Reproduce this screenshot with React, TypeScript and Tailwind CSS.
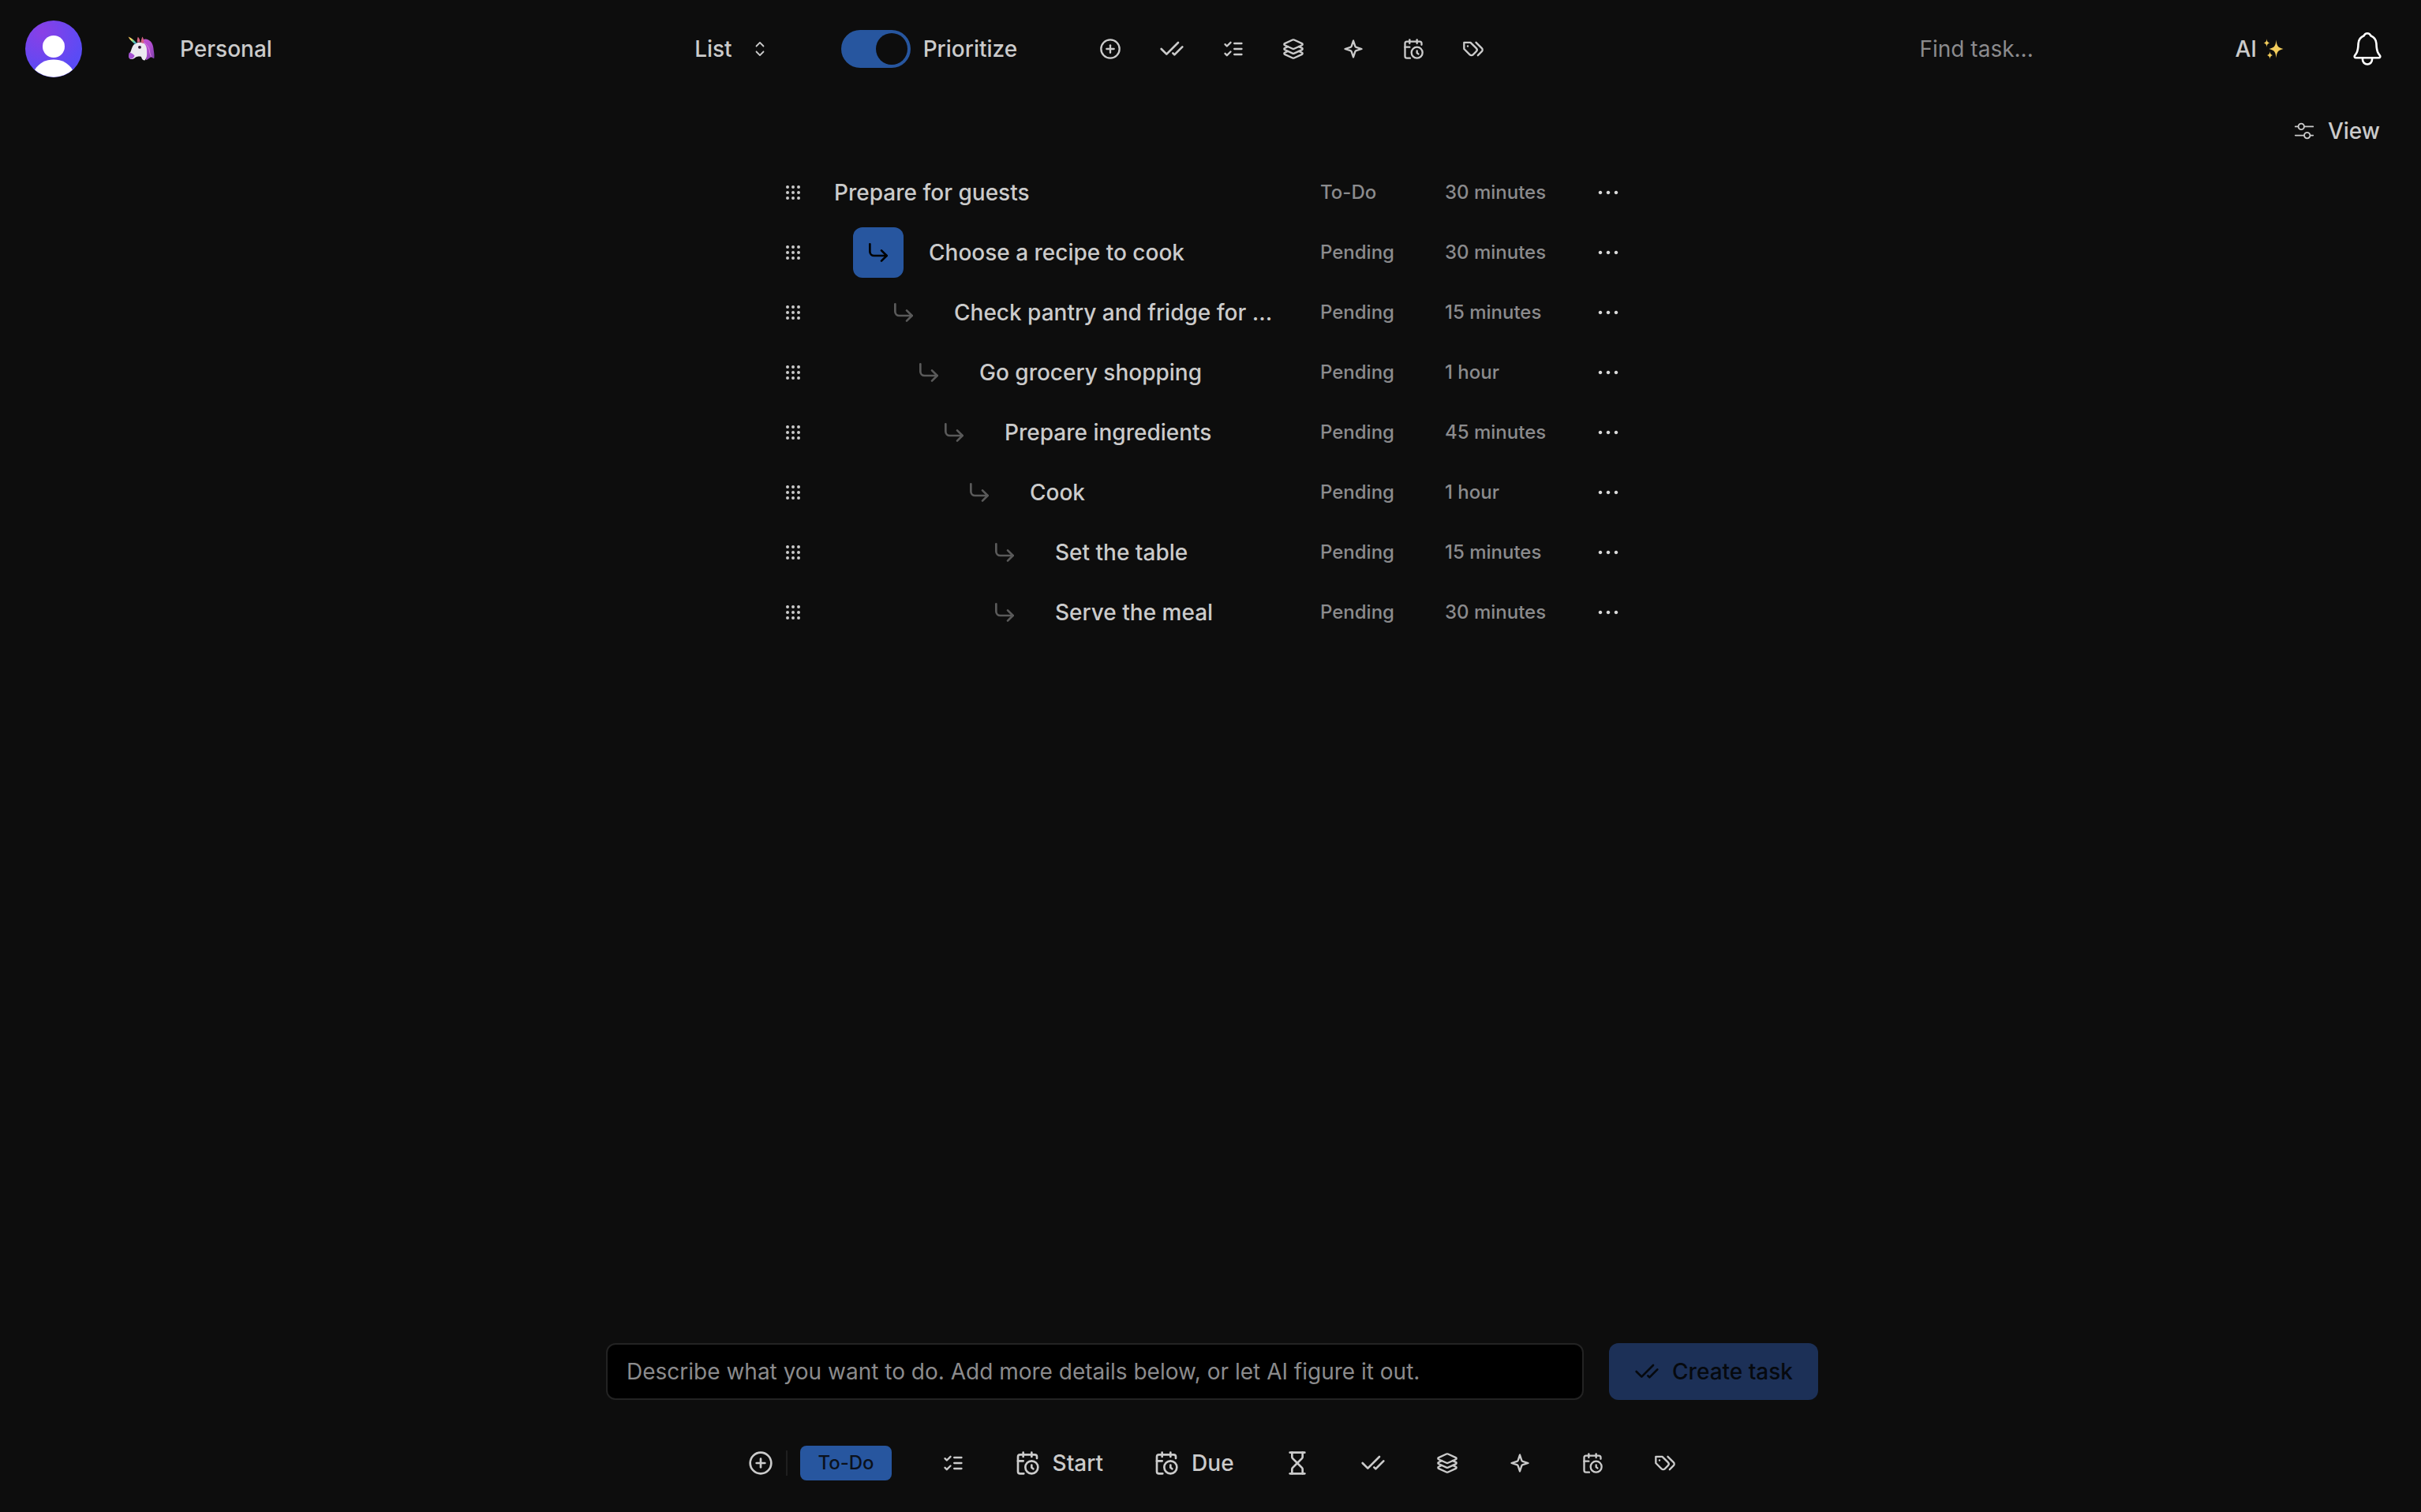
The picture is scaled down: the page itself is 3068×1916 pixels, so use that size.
import { useState, type ReactNode } from "react";
import { CheckCheck, CirclePlus, CornerDownRight, Grip, Hourglass } from "lucide-react";
import { RxCaretSort, RxDotsHorizontal, RxMixerHorizontal } from "react-icons/rx";

type IconProps = { className?: string };

function Glyph({ className, children }: { className?: string; children: ReactNode }) {
  return (
    <svg
      viewBox="0 0 24 24"
      fill="none"
      stroke="currentColor"
      strokeWidth={2}
      strokeLinecap="round"
      strokeLinejoin="round"
      className={className}
      aria-hidden="true"
    >
      {children}
    </svg>
  );
}

const ListChecks = ({ className }: IconProps) => (
  <Glyph className={className}>
    <path d="m3 17 2 2 4-4" />
    <path d="m3 7 2 2 4-4" />
    <path d="M13 6h8" />
    <path d="M13 12h8" />
    <path d="M13 18h8" />
  </Glyph>
);

const LayersThree = ({ className }: IconProps) => (
  <Glyph className={className}>
    <path d="m12.83 2.18a2 2 0 0 0-1.66 0L2.6 6.08a1 1 0 0 0 0 1.83l8.58 3.91a2 2 0 0 0 1.66 0l8.58-3.9a1 1 0 0 0 0-1.83Z" />
    <path d="m6.08 9.5-3.5 1.6a1 1 0 0 0 0 1.81l8.6 3.91a2 2 0 0 0 1.65 0l8.58-3.9a1 1 0 0 0 0-1.83l-3.5-1.59" />
    <path d="m6.08 14.5-3.5 1.6a1 1 0 0 0 0 1.81l8.6 3.91a2 2 0 0 0 1.65 0l8.58-3.9a1 1 0 0 0 0-1.83l-3.5-1.59" />
  </Glyph>
);

const Star = ({ className }: IconProps) => (
  <Glyph className={className}>
    <path d="m12 3-1.9 5.8a2 2 0 0 1-1.287 1.288L3 12l5.8 1.9a2 2 0 0 1 1.288 1.287L12 21l1.9-5.8a2 2 0 0 1 1.287-1.288L21 12l-5.8-1.9a2 2 0 0 1-1.288-1.287Z" />
  </Glyph>
);

const CalendarTime = ({ className }: IconProps) => (
  <Glyph className={className}>
    <path d="M21 7.5V6a2 2 0 0 0-2-2H5a2 2 0 0 0-2 2v14a2 2 0 0 0 2 2h3.5" />
    <path d="M16 2v4" />
    <path d="M8 2v4" />
    <path d="M3 10h5" />
    <path d="M17.5 17.5 16 16.3V14" />
    <circle cx="16" cy="16" r="6" />
  </Glyph>
);

const TagPair = ({ className }: IconProps) => (
  <Glyph className={className}>
    <path d="M9 5H2v7l6.29 6.29c.94.94 2.48.94 3.42 0l3.58-3.58c.94-.94.94-2.48 0-3.42L9 5Z" />
    <path d="M6 9.01V9" />
    <path d="m15 5 6.3 6.3a2.4 2.4 0 0 1 0 3.4L17 19" />
  </Glyph>
);

const Bell = ({ className }: IconProps) => (
  <svg viewBox="0 0 36 44" fill="none" stroke="currentColor" strokeWidth={2.6} strokeLinejoin="round" className={className} aria-hidden="true">
    <path d="M18 2.200c-2 0-3.500 1-4.300 3C9.500 7 6.800 10.500 6.600 15c-.2 6-.3 9.500-2.600 12.700L2.200 30.300c-1 1.400-.3 3 1.500 3h28.600c1.800 0 2.500-1.600 1.500-3l-1.800-2.600c-2.300-3.200-2.400-6.700-2.600-12.700-.2-4.500-2.900-8-7.100-9.800-.8-2-2.300-3-4.300-3Z" />
    <path d="M12 33.500v2a6 6 0 0 0 12 0v-2" />
  </svg>
);

const Unicorn = ({ className }: IconProps) => (
  <svg viewBox="0 0 34 32" className={className} aria-hidden="true">
    <defs>
      <linearGradient id="horn" x1="0" y1="0" x2="1" y2="1">
        <stop offset="0" stopColor="#e8a84c" />
        <stop offset="0.35" stopColor="#f4e06a" />
        <stop offset="0.65" stopColor="#5fd0a8" />
        <stop offset="1" stopColor="#4aa3e8" />
      </linearGradient>
      <linearGradient id="mane" x1="0" y1="0" x2="1" y2="1">
        <stop offset="0" stopColor="#c552cf" />
        <stop offset="0.5" stopColor="#b04fd0" />
        <stop offset="1" stopColor="#7d3fa8" />
      </linearGradient>
    </defs>
    <path d="M17 7c1-3 5-4.500 9-2.500 4.500 2.300 6 6.500 6.500 11 .3 4 1.500 7 .8 12.500-2 0-2.300-2-4-1.500-2.300.5-3 3-6.300 3.500 1-7-2-11-3-14Z" fill="url(#mane)" />
    <path d="M6 13c2-4 6-5.500 10.500-5.200 5.500.6 7.500 5 7.500 9.700 0 4 1 9-2.500 13-2.500 0-4-2-4.500-4.500-2-1-5-.3-7 .5-2 1.500-3.500 3-6 2.500C1 28.500.8 25 2.300 22 3.800 19.500 4.500 16 6 13Z" fill="#ece9f0" />
    <path d="M1.800 20.500c2 .5 5.200 1.500 6.700 4 0 1.500-2 4-4.500 4.300C.8 28.800.4 24.500 1.800 20.500Z" fill="#a552d2" />
    <path d="M11.800 7.500c0-3 .2-5 1-6.800 1.700 1.500 2.700 4 2.700 6.800ZM16.500 8c.3-3 1-5.500 2-7.500 1.700 2.500 2 5.500 1.500 8.500Z" fill="#d4617f" />
    <path d="M20.500 8c4.500 3 6.500 7 7 11s1.500 4.500 2 7" fill="none" stroke="#dd7fe0" strokeWidth="1" />
    <path d="M.5.500c3.500 1.300 8 4.500 10.500 8L9.300 10C6.500 8 2.500 4.500.5.500Z" fill="url(#horn)" />
    <ellipse cx="15" cy="13.800" rx="2" ry="1.900" fill="#2b1a33" />
  </svg>
);

const Sparkles = ({ className }: IconProps) => (
  <svg viewBox="0 0 26 26" fill="#f3cd5c" className={className} aria-hidden="true">
    <path d="M16.500 1.500c.7 7.300 2.200 10 9 11.500-6.800 1.500-8.300 4.200-9 11.500-.7-7.300-2.200-10-9-11.500 6.800-1.500 8.300-4.200 9-11.500Z" />
    <path d="M4.500 0c.3 3.500 1 4.800 4 5.500-3 .7-3.700 2-4 5.500-.3-3.500-1-4.800-4-5.500 3-.7 3.700-2 4-5.500Z" />
    <path d="M8.500 16c.3 3 .9 4.300 3.500 5-2.600.7-3.200 2-3.500 5-.3-3-.9-4.300-3.500-5 2.600-.7 3.200-2 3.500-5Z" />
  </svg>
);

const Avatar = () => (
  <svg viewBox="0 0 72 72" className="size-full" aria-hidden="true">
    <defs>
      <radialGradient id="avatar" cx="0.3" cy="0.2" r="0.75">
        <stop offset="0" stopColor="#8a3fe6" />
        <stop offset="1" stopColor="#5a4bf5" />
      </radialGradient>
    </defs>
    <circle cx="36" cy="36" r="36" fill="url(#avatar)" />
    <circle cx="36" cy="33" r="14" fill="#fff" />
    <path d="M12 62.500C17 54 26 49.500 36 49.500S55 54 60 62.500A36 36 0 0 1 12 62.500Z" fill="#fff" />
  </svg>
);

type Task = { title: string; depth: number; status: string; duration: string; active?: boolean };

const tasks: Task[] = [
  { title: "Prepare for guests", depth: 0, status: "To-Do", duration: "30 minutes" },
  { title: "Choose a recipe to cook", depth: 1, status: "Pending", duration: "30 minutes", active: true },
  { title: "Check pantry and fridge for ...", depth: 2, status: "Pending", duration: "15 minutes" },
  { title: "Go grocery shopping", depth: 3, status: "Pending", duration: "1 hour" },
  { title: "Prepare ingredients", depth: 4, status: "Pending", duration: "45 minutes" },
  { title: "Cook", depth: 5, status: "Pending", duration: "1 hour" },
  { title: "Set the table", depth: 6, status: "Pending", duration: "15 minutes" },
  { title: "Serve the meal", depth: 6, status: "Pending", duration: "30 minutes" },
];

const indents = ["pl-0", "pl-6", "pl-14", "pl-22", "pl-30", "pl-38", "pl-46"];

const filters = [
  { label: "Add filter", Icon: CirclePlus, size: "size-7" },
  { label: "Status", Icon: CheckCheck, size: "size-8" },
  { label: "Checklist", Icon: ListChecks, size: "size-7" },
  { label: "Group", Icon: LayersThree, size: "size-7" },
  { label: "Highlights", Icon: Star, size: "size-7" },
  { label: "Schedule", Icon: CalendarTime, size: "size-7" },
  { label: "Tags", Icon: TagPair, size: "size-7" },
];

const properties = [filters[1], ...filters.slice(3)];

function TaskRow({ task }: { task: Task }) {
  return (
    <li className="flex h-[76px] items-center">
      <button type="button" aria-label={`Move ${task.title}`} className="mr-10 flex size-6 items-center justify-center">
        <Grip className="size-6 shrink-0" />
      </button>
      <div className={`flex w-[552px] items-center whitespace-nowrap ${indents[task.depth]}`}>
        {task.depth > 0 && (
          <button
            type="button"
            aria-label={`Change parent of ${task.title}`}
            className={`mr-8 flex size-16 shrink-0 items-center justify-center rounded-xl ${
              task.active ? "bg-[#27569f] text-black" : "text-[#5a5a5a]"
            }`}
          >
            <CornerDownRight className="size-8" />
          </button>
        )}
        <span>{task.title}</span>
      </div>
      <span className="ml-16 w-[158px] text-2xl text-[#8b8b8d]">{task.status}</span>
      <span className="w-48 text-2xl text-[#8b8b8d]">{task.duration}</span>
      <button type="button" aria-label={`More actions for ${task.title}`} className="text-[#d8d8d8]">
        <RxDotsHorizontal className="size-[30px]" />
      </button>
    </li>
  );
}

export default function App() {
  const [prioritize, setPrioritize] = useState(true);
  return (
    <div className="flex min-h-screen flex-col bg-[#0d0d0d] font-['Inter',sans-serif] text-[28px] leading-10 font-[450] text-[#cbcbcb]">
      <header className="flex items-center justify-between px-8 pt-[26px]">
        <div className="flex items-center">
          <button type="button" aria-label="Account" className="size-18 rounded-full">
            <Avatar />
          </button>
          <button type="button" className="ml-[58px] flex items-center gap-8">
            <Unicorn className="h-8 w-[34px]" />
            Personal
          </button>
        </div>
        <div className="flex items-center pr-4">
          <button type="button" className="flex items-center gap-5">
            List
            <RxCaretSort className="size-[30px]" />
          </button>
          <label className="ml-[88px] flex items-center gap-4">
            <input
              type="checkbox"
              role="switch"
              checked={prioritize}
              onChange={(e) => setPrioritize(e.target.checked)}
              className="h-12 w-[88px] appearance-none rounded-full bg-neutral-700 p-1 before:block before:size-10 before:rounded-full before:bg-[#0d0d0d] checked:bg-[#27569f] checked:before:ml-auto"
            />
            Prioritize
          </label>
          <div className="ml-[104px] flex items-center gap-12">
            {filters.map(({ label, Icon, size }) => (
              <button key={label} type="button" aria-label={label}>
                <Icon className={size} />
              </button>
            ))}
          </div>
        </div>
        <div className="flex items-center justify-end">
          <input
            type="search"
            aria-label="Find task"
            placeholder="Find task..."
            className="w-[336px] bg-transparent font-normal placeholder:text-[#8b8b8d] focus:outline-none"
          />
          <button type="button" className="ml-16 flex items-center gap-2">
            AI
            <Sparkles className="size-[26px]" />
          </button>
          <button type="button" aria-label="Notifications" className="mr-[18px] ml-[88px] text-white">
            <Bell className="h-11 w-9" />
          </button>
        </div>
      </header>

      <div className="flex justify-end px-[52px] pt-12">
        <button type="button" className="flex items-center gap-4">
          <RxMixerHorizontal className="size-7" />
          View
        </button>
      </div>

      <main className="flex flex-1 justify-center pt-5">
        <ul className="w-[1082px]">
          {tasks.map((task) => (
            <TaskRow key={task.title} task={task} />
          ))}
        </ul>
      </main>

      <footer className="mx-auto w-full max-w-[1540px] pb-10 pl-1">
        <div className="flex gap-8">
          <input
            type="text"
            aria-label="Task description"
            placeholder="Describe what you want to do. Add more details below, or let AI figure it out."
            className="h-18 flex-1 rounded-xl border-2 border-[#232323] bg-black px-6 font-normal placeholder:text-[#8b8b8d] focus:outline-none"
          />
          <button
            type="button"
            disabled
            className="flex h-18 items-center gap-4 rounded-xl bg-[#1c3057] px-8 text-[#06090e]"
          >
            <CheckCheck className="size-8" />
            Create task
          </button>
        </div>
        <div className="mt-[58px] flex items-center justify-center">
          <button type="button" aria-label="Add property">
            <CirclePlus className="size-8" />
          </button>
          <div className="mx-4 h-8 w-0.5 bg-[#1f1f1f]" />
          <button type="button" className="h-11 rounded-lg bg-[#27569f] px-[22px] text-2xl text-[#0b111b]">
            To-Do
          </button>
          <button type="button" aria-label="Checklist" className="ml-16">
            <ListChecks className="size-7" />
          </button>
          <button type="button" className="ml-16 flex items-center gap-4">
            <CalendarTime className="size-8" />
            Start
          </button>
          <button type="button" className="ml-16 flex items-center gap-4">
            <CalendarTime className="size-8" />
            Due
          </button>
          <button type="button" aria-label="Duration" className="ml-16">
            <Hourglass className="size-8" />
          </button>
          <div className="ml-16 flex items-center gap-16">
            {properties.map(({ label, Icon, size }) => (
              <button key={label} type="button" aria-label={label}>
                <Icon className={size} />
              </button>
            ))}
          </div>
        </div>
      </footer>
    </div>
  );
}
